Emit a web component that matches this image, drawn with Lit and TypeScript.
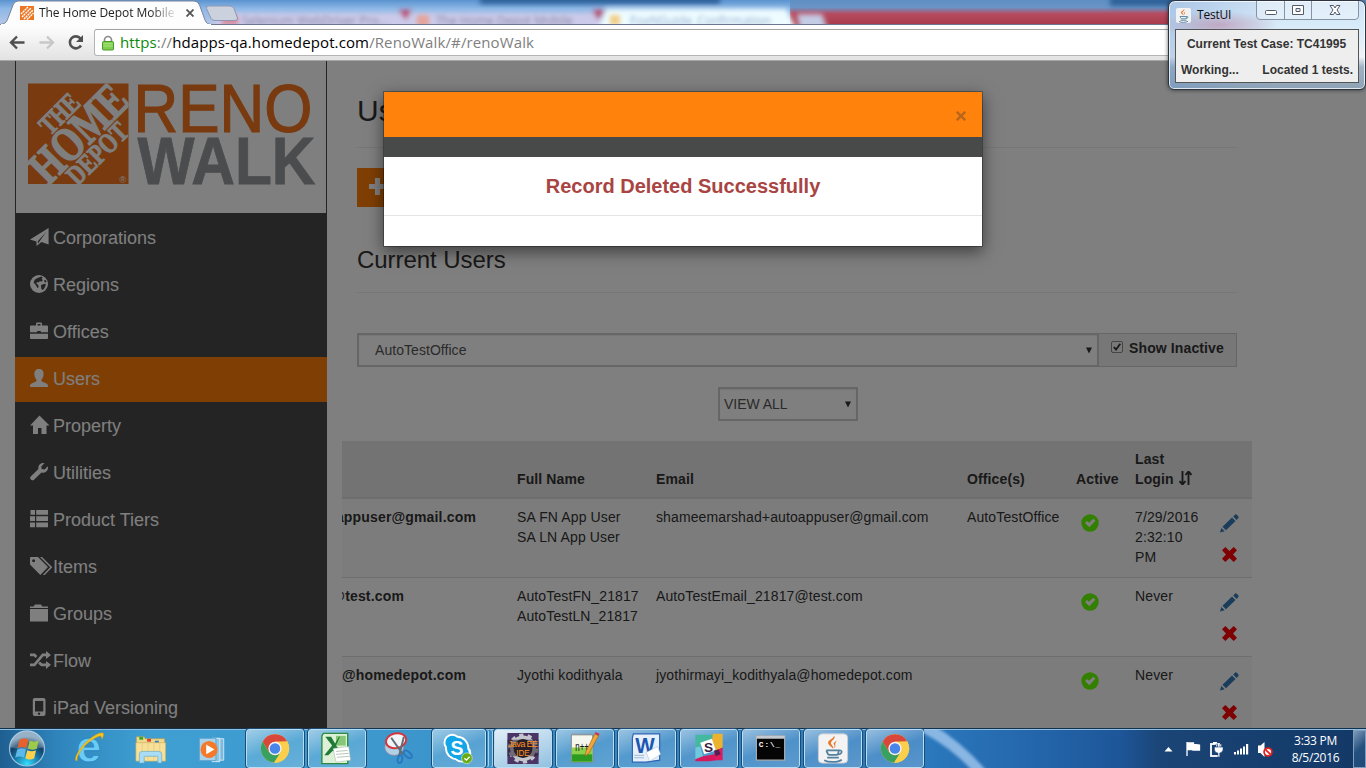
import { LitElement, html, css, svg } from "lit";
import { customElement } from "lit/decorators.js";

const WIN_LOGO = svg`
  <path d="M17 13.500c3-1.800 6-1.800 9-.2l-2 8.200c-3-1.500-6-1.500-8.800 0z" fill="#e8602c"/>
  <path d="M27.200 14c3 1.500 6 1.500 9 0l-2 8.200c-3 1.500-6 1.300-8.800-.1z" fill="#9ccb4a"/>
  <path d="M14.700 23c3-1.500 6-1.500 8.800 0l-2 8c-3-1.500-6-1.500-8.800.2z" fill="#5fb8ea"/>
  <path d="M24.800 23.700c3 1.400 6 1.400 8.800 0l-2 8.200c-3 1.400-6 1.400-8.800-.2z" fill="#fbd04a"/>`;

const CHROME = svg`
  <circle cx="29" cy="20" r="14.500" fill="#fbcb43"/>
  <path d="M16.400 12.800A14.500 14.500 0 0 1 41.600 12.800L29 13.500L22.700 23.700z" fill="#d8473a"/>
  <path d="M16.400 12.800L22.700 23.700L29 27.200L34 25L28.200 34.500A14.500 14.500 0 0 1 16.400 12.800z" fill="#38a160"/>
  <path d="M29 12.800H41.600A14.500 14.500 0 0 1 28.200 34.500L35.500 23.500z" fill="#fbcf4c"/>
  <circle cx="29" cy="20" r="6.800" fill="#f4f4f4"/><circle cx="29" cy="20" r="5.400" fill="#4a86ea"/>`;

const JAVA_CUP = svg`
  <path d="M30 7c3 3-4 5-3 8c.5 2 3 3 2 5c-1-2-5-3-5-6c0-3 6-4 6-7zM33 12c-2 1-4 2-3 4c1 1 1 3-1 4c5-2 0-4 4-8z" fill="#e8762b"/>
  <path d="M22 22h13M22 22c1 1 1 4 3 4.500h8c2-.5 1.500-3 2-4.500c4-1 4 4-1 4M23 29.500h12M20 32c4 2.500 14 2.500 18-.5" fill="none" stroke="#54819f" stroke-width="1.800"/>`;

const TASKS: { cls: string; art: unknown }[] = [
  { cls: "", art: svg`
    <text x="16" y="34" font-family="Liberation Sans" font-size="46" font-weight="bold" fill="#6accf5" stroke="#2a86c4" stroke-width=".8">e</text>
    <path d="M17 32.500c-5 1 0-11 10-20c8-7 17-11 17-7c0 2-1 4-2 5c0-3-1-4-4-2.500C26 13 16 26 17 32.500z" fill="#f7c31d" stroke="#c9930a" stroke-width=".4"/>` },
  { cls: "", art: svg`
    <path d="M14 8h8l1 2h20v5H14z" fill="#f2d98a" stroke="#b79a4a" stroke-width=".6"/>
    <path d="M17 8h4v3h-4z" fill="#36a832"/><path d="M25 10h4v3h-4z" fill="#d8432f"/><path d="M33 12h4v3h-4z" fill="#2f7fd0"/>
    <path d="M13.500 14H44v19H13.500z" fill="#f7e09a" stroke="#c5a95a" stroke-width=".6"/>
    <path d="M20 14v18M26 14v18M32 14v18M38 14v18" stroke="#e6c970" stroke-width=".7"/>
    <path d="M17 35v-9q0-3 3-3h17q3 0 3 3v9h-4v-7H22v7z" fill="#a9dcf5" stroke="#5ba3c9" stroke-width=".6"/>` },
  { cls: "", art: svg`
    <path d="M33 10h7v22h-7z" fill="#7cb9dc" stroke="#cbe6f5"/><path d="M28 9.500h8v24h-8z" fill="#8cc6e6" stroke="#d5edf8"/>
    <path d="M15 9.500h17v23H15z" fill="#a6d3eb" stroke="#5da3ce"/>
    <circle cx="25" cy="21" r="8.800" fill="#f4792a"/><path d="M22 16l8.500 5l-8.500 5z" fill="#fff"/>` },
  { cls: "open", art: CHROME },
  { cls: "open", art: svg`
    <path d="M15 4.500h25v31H13.500V7z" fill="#dff0d8" stroke="#2e8a3c" stroke-width="1.400"/>
    <path d="M28 7h10v10H28z" fill="#86c677"/><path d="M17 8h6l4 7l4-7h1l-4 9l8 10h-7l-4-5l-5 5h-4l8-10z" fill="#1e7a34"/>
    <path d="M25 20l16-2l2 14l-15 2z" fill="#fff" stroke="#9ab59d" stroke-width=".5"/>
    <path d="M28 23l12-1M28 26l13-1M29 29l13-1" stroke="#a5b5a5" stroke-width=".8"/>` },
  { cls: "", art: svg`
    <ellipse cx="24" cy="19" rx="9.500" ry="8" fill="#c3dcea" opacity=".85" stroke="#d98088" stroke-width=".6"/>
    <ellipse cx="26" cy="12" rx="10.500" ry="7.500" transform="rotate(-12 26 12)" fill="#f2f5f7" stroke="#d5363d" stroke-width="2"/>
    <path d="M21 9l12 17M34 8l-5 20" stroke="#5f6c76" stroke-width="2"/>
    <ellipse cx="30" cy="31" rx="2.300" ry="4" transform="rotate(12 30 31)" fill="none" stroke="#2a78bd" stroke-width="2"/>
    <ellipse cx="38" cy="26" rx="5" ry="2.600" transform="rotate(42 38 26)" fill="none" stroke="#2a78bd" stroke-width="2"/>` },
  { cls: "open stacked", art: svg`
    <circle cx="20" cy="14" r="9" fill="#fff"/><circle cx="30" cy="25" r="9.500" fill="#fff"/><circle cx="25" cy="19.500" r="12.500" fill="#fff"/>
    <circle cx="20" cy="14" r="7" fill="#12a5e8"/><circle cx="29.500" cy="25" r="7.500" fill="#12a5e8"/><circle cx="25" cy="19.500" r="10.500" fill="#12a5e8"/>
    <text x="18.300" y="26.500" font-family="Liberation Sans" font-size="20" font-weight="bold" fill="#fff">S</text>
    <circle cx="35" cy="30" r="5.500" fill="#6aab14" stroke="#e3f2d0" stroke-width=".6"/><path d="M32.500 30l2 2l3.300-3.500" fill="none" stroke="#fff" stroke-width="1.300"/>` },
  { cls: "open active", art: svg`
    <path d="M13 4h32v32H13z" fill="#4a3566"/>
    <circle cx="29" cy="20" r="11.500" fill="#221c26" stroke="#c4c4cc" stroke-width="3.500"/>
    <circle cx="29" cy="20" r="14" fill="none" stroke="#c4c4cc" stroke-width="3" stroke-dasharray="4.400 4.400"/>
    <path d="M13 11h32v17H13z" fill="#2a2030" opacity=".55"/>
    <text x="29" y="18.500" text-anchor="middle" font-family="Liberation Sans" font-size="9.500" textLength="31" fill="#ff9022">Java EE</text>
    <text x="29" y="27.500" text-anchor="middle" font-family="Liberation Sans" font-size="10" textLength="14" lengthAdjust="spacingAndGlyphs" fill="#ff9022">IDE</text>` },
  { cls: "open", art: svg`
    <path d="M15 6h22v28H15z" fill="#f5f7ee" stroke="#777" stroke-width=".8"/>
    <path d="M15.500 19h21v14.500h-21z" fill="#8bd14b"/><path d="M15.500 26h21v7.500h-21z" fill="#2d9b1f"/>
    <path d="M16 6v-2M19 6v-2M22 6v-2M25 6v-2M28 6v-2M31 6v-2M34 6v-2" stroke="#999" stroke-width="1"/>
    <text x="19" y="23" font-family="Liberation Sans" font-size="14" textLength="14" lengthAdjust="spacingAndGlyphs" fill="#111">n++</text>
    <path d="M29 28l1-5l9-18l4 2l-10 18z" fill="#eea63a" stroke="#9a5a16" stroke-width=".6"/><path d="M39 5l4 2l1-2l-4-2z" fill="#d1354b"/>` },
  { cls: "open", art: svg`
    <path d="M15 5h27v27l-14 2H14V9z" fill="#e6f0fa" stroke="#2c62b4" stroke-width="1.200"/>
    <text x="17" y="25" font-family="Liberation Sans" font-size="23" font-weight="bold" textLength="20" lengthAdjust="spacingAndGlyphs" fill="#1b57b0">W</text>
    <path d="M16 27h10M16 29.500h10" stroke="#8aa8d0" stroke-width=".8"/>
    <path d="M28 24l12-6l3 8l-11 7z" fill="#fff" stroke="#9db3d0" stroke-width=".5"/>` },
  { cls: "open", art: svg`
    <path d="M15 6h18l-3 9l-10 3l-5 1z" fill="#45b8a0"/><path d="M33 5h10v14l-7 3l-4-9z" fill="#ecb32e"/>
    <path d="M15 19l5-1l3 10l-8 3z" fill="#70c8dc"/><path d="M15 31l8-3l12-2l2 6l-8 1H15z" fill="#d6195c"/><path d="M36 22l7-3v13h-7l-2-6z" fill="#dd1c60"/>
    <path d="M20 14l12-4l4 12l-12 4z" fill="#fff"/><path d="M34 22l5-1l2 5l-5 2z" fill="#5a2050"/>
    <text x="24" y="24" font-family="Liberation Sans" font-size="14" font-weight="bold" fill="#3c1f43">S</text>` },
  { cls: "open", art: svg`
    <path d="M14 7h29v25H14z" fill="#050505" stroke="#a9adb0" stroke-width="1.200"/><path d="M14 7h29v3H14z" fill="#c3c9ce"/>
    <text x="16.500" y="18.500" font-family="Liberation Mono" font-size="8" font-weight="bold" textLength="22" fill="#fff">C:\\_</text>` },
  { cls: "open", art: svg`<rect x="14" y="5" width="30" height="30" rx="4" fill="#f3f3f3" stroke="#c5cdd4"/>${JAVA_CUP}` },
  { cls: "open", art: CHROME },
];

const NAV: { label: string; icon: unknown }[] = [
  { label: "Corporations", icon: svg`<path d="M0 11.500L18.600 0V16.500L11.500 14L6.500 18V13.500zM16.300 3.800L7.800 13.300L8 15.500L9.600 13.300z" fill-rule="evenodd"/>` },
  { label: "Regions", icon: svg`<circle cx="9" cy="9" r="9"/><path class="cut" d="M7.500 3l4-1.600l1.200 1l-1.200 1.600l1.500 1l-1.400 1.400l-1.900-.2l-1 1.400l-1.700-.5l-.6 1.600l1.600 1l.7 2l-1 1.500l-2.500-4l-1.600-1.500l1-3zM11 10l3.500-1.200l1.500.8l-1.200 3l-2 2.600l-1.600-1.700zM13.800 5.500l2-.4l.8 1.900l-1.600.5z"/>` },
  { label: "Offices", icon: svg`<path d="M1 3.500H6V1.800Q6 .5 7.300.5h3.400Q12 .5 12 1.800V3.500h5q1 0 1 1V10.200H10.800V9H7.200v1.200H0V4.500q0-1 1-1zM7.500 2v1.500h3V2zM0 11.800H18V16q0 1-1 1H1q-1 0-1-1z" fill-rule="evenodd"/>` },
  { label: "Users", icon: svg`<path d="M9 0c3 0 4.800 2 4.600 5.200c-.1 2.300-.9 4-2.100 5.200c-.4 1 .1 1.900 1 2.300l4 1.800q1.500.7 1.500 2.200V18H0v-1.300q0-1.500 1.500-2.200l4-1.800c.9-.4 1.400-1.300 1-2.300C5.300 9.200 4.500 7.500 4.400 5.200C4.200 2 6 0 9 0z"/>` },
  { label: "Property", icon: svg`<path d="M9.500-.5L19.500 9.500H16.500V18H11.500V12H8V18H3V9.500H0z"/>` },
  { label: "Utilities", icon: svg`<path d="M17.800 3.300L14.500 6.500L11.700 5.900L11.300 3.500L14.400.2C11.200-.7 7.700 1.900 8.400 6L.5 13.700C-.8 15.300 1.800 18.300 3.800 17L11.500 9.500C15.500 10.600 18.900 7.200 17.800 3.300z"/>` },
  { label: "Product Tiers", icon: svg`<path d="M.5 0H5V4.700H.5zM6.200 0H18V4.700H6.200zM0 6.200H5V11H0zM6.200 6.200H18V11H6.200zM0 12.500H5V17.200H0zM6.200 12.500H18V17.200H6.200z"/>` },
  { label: "Items", icon: svg`<path d="M0 1Q0 0 1 0H8L18 10L10.300 18L0 7.500zM3.600 2.200a1.500 1.500 0 1 0 .01 0z" fill-rule="evenodd"/><path d="M10 0H12L22.300 10.200L14.700 18H12.800L20.200 10.200z"/>` },
  { label: "Groups", icon: svg`<path d="M0 2.500H3.500L5 .5H11L12.300 2.500H18V4H0zM0 5H18V17.500H0z"/>` },
  { label: "Flow", icon: svg`<path d="M0 2.500H5L7.300 5L5.500 7L3.800 5.300H0zM0 15.200H5L13.400 5.300H16V8L21 3.900L16 0V2.500H12.200L3.800 12.400H0zM9.900 10.500L8.200 12.700L11.200 15.200H16V18L21 13.800L16 10V12.400H12.300z"/>` },
  { label: "iPad Versioning", icon: svg`<path d="M4.500 0h9Q15.500 0 15.500 2V16Q15.500 18 13.500 18H4.500Q2.800 18 2.800 16V2Q2.800 0 4.500 0zM5 3V13.500H13.300V3zM9 14.500a1.200 1.200 0 1 0 .01 0z" fill-rule="evenodd"/>` },
];

const ROWS = [
  { login: "autoappuser@gmail.com", pad: 33, names: ["SA FN App User", "SA LN App User"], email: "shameemarshad+autoappuser@gmail.com", office: "AutoTestOffice", last: ["7/29/2016", "2:32:10", "PM"] },
  { login: "AutoTestUser_21817@test.com", pad: 105, names: ["AutoTestFN_21817", "AutoTestLN_21817"], email: "AutoTestEmail_21817@test.com", office: "", last: ["Never"] },
  { login: "jyothirmayi_kodithyala@homedepot.com", pad: 43, names: ["Jyothi kodithyala"], email: "jyothirmayi_kodithyala@homedepot.com", office: "", last: ["Never"] },
];

@customElement("browser-chrome")
class BrowserChrome extends LitElement {
  static styles = css`
    :host { display: block; height: 61px; font-family: "Open Sans", "Noto Sans", sans-serif; }
    .strip { display: grid; height: 25px; overflow: hidden; }
    .strip > * { grid-area: 1 / 1; }
    .glass { display: block; width: 1366px; height: 25px; }
    .tab { display: flex; align-items: center; width: 188px; height: 25px; padding-left: 20px; z-index: 1; }
    .fav { width: 14px; height: 14px; flex: none; }
    .title { width: 139px; margin-left: 5px; font-size: 12px; letter-spacing: -0.05px; color: #222; white-space: nowrap; overflow: hidden; -webkit-mask-image: linear-gradient(90deg, #000 80%, transparent 100%); }
    .close { width: 8px; height: 8px; margin-left: 8px; flex: none; }
    .bar { display: flex; box-sizing: border-box; height: 36px; padding: 4px 0 4px; background: linear-gradient(#fefefe, #e2e2e2); border-bottom: 1px solid #a6a6a6; }
    .nav { width: 94px; height: 27px; flex: none; }
    .omni { flex: 1; display: flex; align-items: center; box-sizing: border-box; height: 27px; padding-left: 7px; border: 1px solid #b4b4b4; border-top-color: #a0a0a0; border-radius: 3px 0 0 3px; background: #fff; font-size: 15px; color: #808080; white-space: nowrap; letter-spacing: 0.12px; }
    .url { margin-top: -2px; }
    .lock { width: 12px; height: 16px; margin-right: 6px; }
    .secure { color: #0b8a0b; }
    .host { color: #000; }
  `;
  render() {
    return html`
      <div class="strip">
        <svg class="glass" viewBox="0 0 1366 25">
          <defs>
            <linearGradient id="g" x2="0" y2="1"><stop offset="0" stop-color="#5a93cf"/><stop offset=".35" stop-color="#8db8e6"/><stop offset="1" stop-color="#b8c8e8"/></linearGradient>
            <linearGradient id="r" x2="0" y2="1"><stop offset="0" stop-color="#5f8fc4"/><stop offset=".3" stop-color="#6b94c6"/><stop offset=".55" stop-color="#b64c60"/><stop offset="1" stop-color="#a83a4c"/></linearGradient>
            <filter id="b" x="-20%" y="-60%" width="140%" height="220%"><feGaussianBlur stdDeviation="2.500"/></filter>
            <filter id="bt" x="-10%" y="-60%" width="120%" height="220%"><feGaussianBlur stdDeviation="2.100"/></filter>
          </defs>
          <path d="M0 0H1366V25H0z" fill="url(#g)"/>
          <path d="M790 0H1366V25H790z" fill="url(#r)"/>
          <g filter="url(#b)">
            <path d="M480-6H720V4H480zM1110-6H1180V6H1110z" fill="#2f6299"/>
            <path d="M215 13H600V32H215z" fill="#cccaea"/>
            <path d="M398 10l14 0l-6 10zM592 10l14 0l-8 10z" fill="#b8436b"/>
            <path d="M606 9H786L797 30H598z" fill="#eefcff"/>
            <path d="M797 14H822L828 30H800z" fill="#c4cbe4"/>
          </g>
          <g filter="url(#bt)" font-family="Open Sans" font-size="12">
            <rect x="222" y="16" width="16" height="9" fill="#d98b9c"/><rect x="417" y="15" width="12" height="12" fill="#e3a49c"/><rect x="610" y="15" width="10" height="10" fill="#f2cf8a"/>
            <text x="242" y="25" fill="#85849e">Selenium WebDriver Pro...</text><text x="436" y="25" fill="#85849e">The Home Depot Mobile</text><text x="630" y="25" fill="#8fa9cf">FoxNGuide_Confirmation</text>
          </g>
          <path d="M0 24.500H1366" stroke="#6c7690"/>
          <path d="M206.500 8.500Q206 6 208.500 6H230Q233 6 234 8.500L237.500 18Q238 20.500 235 20.500H215Q212 20.500 211 18.500z" fill="#ccd2dd" stroke="#8d97b4"/>
          <path d="M0 25V24.500Q6 24 7.500 19.500L13 5Q14.500 1 18 1H194Q198 1 199.500 5L205 20Q206.500 24.500 212 24.500V25z" fill="#fdfdfd" stroke="#7a829b" stroke-width="1"/>
          <path d="M1 24H211V25.500H1z" fill="#fdfdfd"/>
        </svg>
        <div class="tab">
          <svg class="fav" viewBox="0 0 14 14"><path d="M0 0H14V14H0z" fill="#ee7623"/><path d="M1 8L8 1M2 11L11 2M4 13L13 4M7 13.500L13.500 7" stroke="#fff" stroke-width="1.400" stroke-dasharray="2 .6"/></svg>
          <span class="title">The Home Depot Mobile Apps</span>
          <svg class="close" viewBox="0 0 8 8"><path d="M.5.5L7.500 7.500M7.500.5L.5 7.500" stroke="#555" stroke-width="1.800"/></svg>
        </div>
      </div>
      <div class="bar">
        <svg class="nav" viewBox="0 0 94 27">
          <path d="M24.500 13.500H12M17 7.500L11 13.500L17 19.500" fill="none" stroke="#505050" stroke-width="2.400"/>
          <path d="M39.500 13.500H52M47 7.500L53 13.500L47 19.500" fill="none" stroke="#c8c8c8" stroke-width="2.400"/>
          <path d="M80.500 9.500A6 6 0 1 0 81 16.500" fill="none" stroke="#505050" stroke-width="2.600"/><path d="M83 6V13H76z" fill="#505050"/>
        </svg>
        <div class="omni">
          <svg class="lock" viewBox="0 0 12 16"><path d="M2.500 8V5a3.500 3.500 0 0 1 7 0V8" fill="none" stroke="#8c8c8c" stroke-width="1.700"/><rect x=".5" y="6.500" width="11" height="8.500" rx="1" fill="#7fce4e" stroke="#4c9a2c"/><path d="M1.500 8.800h9M1.500 11h9" stroke="#a8e482"/></svg>
          <span class="url"><span class="secure">https</span>://<span class="host">hdapps-qa.homedepot.com</span>/RenoWalk/#/renoWalk</span>
        </div>
      </div>`;
  }
}

@customElement("side-nav")
class SideNav extends LitElement {
  static styles = css`
    :host { display: block; width: 312px; height: 667px; overflow: hidden; background: #484848; font: 18px "Liberation Sans", Arial, sans-serif; color: #fff; }
    .logo { display: block; width: 310px; height: 152px; margin: 0 1px; background: #fff; }
    .items { padding-top: 3px; }
    .item { display: flex; align-items: center; box-sizing: border-box; height: 45px; margin-bottom: 2px; padding-left: 15px; }
    .item.on { background: #ff7e08; }
    .icon { width: 18px; height: 18px; margin: 0 5px 4px 0; overflow: visible; fill: #fff; }
    .cut { fill: #484848; }
    .item span { padding-bottom: 1px; }
  `;
  render() {
    return html`
      <svg class="logo" viewBox="16 61 310 152">
        <defs><clipPath id="sq"><path d="M28 83.500H128.500V184H28z"/></clipPath></defs>
        <path d="M28 83.500H128.500V184H28z" fill="#f27420"/>
        <g clip-path="url(#sq)" fill="#fff" stroke="#fff" font-family="Liberation Serif" font-weight="bold">
          <g transform="translate(78.300 133.500) rotate(-45)">
            <text x="-22" y="-18" font-size="28" stroke-width="1" textLength="45" lengthAdjust="spacingAndGlyphs">THE</text>
            <text x="-59" y="16" font-size="48" stroke-width="1.500" textLength="118" lengthAdjust="spacingAndGlyphs">HOME</text>
            <text x="-38" y="37" font-size="28" stroke-width="1" textLength="75" lengthAdjust="spacingAndGlyphs">DEPOT</text>
          </g>
          <text x="119.500" y="182.500" font-size="9" stroke="none" font-family="Liberation Sans" font-weight="normal">®</text>
        </g>
        <text x="133.500" y="132" font-family="Liberation Sans" font-size="69" fill="#f27420" stroke="#f27420" stroke-width="1.200" textLength="179" lengthAdjust="spacingAndGlyphs">RENO</text>
        <text x="137.500" y="183.500" font-family="Liberation Sans" font-size="67" font-weight="bold" fill="#97999b" stroke="#97999b" stroke-width=".8" textLength="178" lengthAdjust="spacingAndGlyphs">WALK</text>
      </svg>
      <div class="items">
        ${NAV.map((n) => html`<div class="item ${n.label === "Users" ? "on" : ""}"><svg class="icon" viewBox="0 0 18 18">${n.icon}</svg><span>${n.label}</span></div>`)}
      </div>`;
  }
}

@customElement("users-page")
class UsersPage extends LitElement {
  static styles = css`
    :host { display: block; width: 910px; height: 667px; overflow: hidden; font: 14px/20px "Liberation Sans", Arial, sans-serif; letter-spacing: 0.12px; color: #333; }
    .top { padding: 0 15px; }
    h1, h2 { margin: 0; font-weight: 400; letter-spacing: 0; border-bottom: 1px solid #eee; box-sizing: border-box; }
    h1 { height: 87px; padding-top: 33px; font-size: 30px; line-height: 34px; }
    .add { display: flex; align-items: center; width: 120px; height: 39px; margin-top: 20px; padding-left: 12px; box-sizing: border-box; background: #ff7e08; }
    .add svg { width: 17px; height: 17px; margin-bottom: 3px; }
    h2 { height: 86px; padding-top: 39px; font-size: 24px; line-height: 28px; letter-spacing: -0.06px; }
    .filter { display: flex; margin-top: 40px; height: 34px; }
    .select { display: flex; align-items: center; justify-content: space-between; box-sizing: border-box; height: 34px; border: 2px solid #ccc; color: #555; padding: 0 5px 0 4px; box-shadow: inset 0 1px 1px rgba(0,0,0,.08); }
    .select svg { width: 6px; height: 7px; }
    .wide { width: 742px; padding-left: 16px; letter-spacing: 0.05px; }
    .small { width: 140px; margin: 20px 0 20px 361px; letter-spacing: -0.05px; }
    .inactive { display: flex; align-items: center; flex: 1; box-sizing: border-box; border: 1px solid #ccc; border-left: 0; background: #eee; font-weight: 700; padding: 0 0 4px 12px; }
    .box { width: 12px; height: 12px; margin: 0 6px 3px 0; }
    .row { display: grid; box-sizing: border-box; grid-template-columns: 167px 139px 311px 109px 59px 85px 40px; height: 79px; border-top: 1px solid #ddd; }
    .row.first { height: 78px; border-top: 0; }
    .row.odd { background: #f9f9f9; }
    .row > div { padding: 8px 0 0 8px; white-space: nowrap; }
    .row > .login { display: flex; justify-content: flex-end; overflow: hidden; padding-left: 0; font-weight: 700; letter-spacing: 0.16px; }
    .head { height: 58px; background: #e6e6e6; border-top: 0; border-bottom: 2px solid #ddd; font-weight: 700; align-items: end; }
    .head > div { padding: 0 0 8px 8px; }
    .sort { width: 13px; height: 14px; margin-left: 1px; vertical-align: -1px; }
    .row > .ok { padding: 15px 0 0 13px; }
    .ok svg { display: block; width: 18px; height: 18px; }
    .acts { display: flex; flex-direction: column; gap: 14px; }
    .row > .acts { padding: 15px 0 0 8px; }
    .pencil { display: block; width: 19px; height: 19px; }
    .del { display: block; width: 15px; height: 15px; margin-left: 2px; }
  `;
  render() {
    const arrow = html`<svg viewBox="0 0 6 7"><path d="M0 .5H6L3 6.500z" fill="#333"/></svg>`;
    return html`
      <div class="top">
        <h1>Users</h1>
        <div class="add"><svg viewBox="0 0 17 17"><path d="M6 0H11V6H17V11H11V17H6V11H0V6H6z" fill="#fff"/></svg></div>
        <h2>Current Users</h2>
        <div class="filter">
          <div class="select wide"><span>AutoTestOffice</span>${arrow}</div>
          <div class="inactive"><svg class="box" viewBox="0 0 12 12"><rect x=".5" y=".5" width="11" height="11" rx="1.500" fill="#f2f2f2" stroke="#888"/><path d="M2.800 6L5 8.500L9.300 2.800" fill="none" stroke="#333" stroke-width="1.800"/></svg>Show Inactive</div>
        </div>
        <div class="select small"><span>VIEW ALL</span>${arrow}</div>
      </div>
      <div class="row head">
        <div></div><div>Full Name</div><div>Email</div><div>Office(s)</div><div>Active</div>
        <div>Last<br>Login <svg class="sort" viewBox="0 0 13 14"><path d="M3.500 0V13M.5 10L3.500 13.500L6.500 10M9.500 14V1M6.500 4L9.500.5L12.500 4" fill="none" stroke="#333" stroke-width="1.900"/></svg></div><div></div>
      </div>
      ${ROWS.map((r, i) => html`
        <div class="row ${i === 0 ? "first" : ""} ${i % 2 === 0 ? "odd" : ""}">
          <div class="login" style="padding-right:${r.pad}px">${r.login}</div>
          <div>${r.names.map((n) => html`${n}<br>`)}</div>
          <div>${r.email}</div>
          <div>${r.office}</div>
          <div class="ok"><svg viewBox="0 0 18 18"><circle cx="9" cy="9" r="8.700" fill="#66ff00"/><path d="M4 9L6 7L8 8.800L12.300 4.700L14.400 6.800L8.300 13.200z" fill="#fff"/></svg></div>
          <div>${r.last.map((n) => html`${n}<br>`)}</div>
          <div class="acts">
            <svg class="pencil" viewBox="0 0 19 19"><path d="M0 18.500L1.300 14L4.700 17.300zM2.500 12.800L12 3.500L15.500 7L6 16.300zM13.200 2.500L15.200.5Q16 0 16.800.8L18.400 2.400Q19 3.200 18.400 4L16.600 5.900z" fill="#337ab7"/></svg>
            <svg class="del" viewBox="0 0 15 15"><path d="M3.300 0L7.500 4L11.700 0L15 3.300L11 7.500L15 11.700L11.700 15L7.500 11L3.300 15L0 11.700L4 7.500L0 3.300z" fill="#f00"/></svg>
          </div>
        </div>`)}`;
  }
}

@customElement("task-bar")
class TaskBar extends LitElement {
  static styles = css`
    :host { display: flex; box-sizing: border-box; height: 40px; border-top: 1px solid #12314d; box-shadow: inset 0 1px #8fbfe0;
      background: linear-gradient(90deg, #1f5f91 0, #2f86bd 60px, #3f9fd2 150px, #3c97cd 400px, #3283c2 700px, #2b78bd 930px, #2363a8 1050px, #1d5699 1120px, #1b4576 1160px, #123866 1366px); }
    .start { width: 60px; height: 39px; flex: none; }
    .slots { display: flex; gap: 4px; }
    .slot { box-sizing: border-box; width: 58px; height: 39px; }
    .slot svg { display: block; width: 58px; height: 38px; }
    .open { border: 1px solid #b9ddf2; border-radius: 3px; outline: 1px solid #1c4c74; background: linear-gradient(160deg, rgba(255,255,255,.5), rgba(255,255,255,.15) 50%, rgba(255,255,255,.22)); }
    .open svg { margin: -1px; }
    .active { background: linear-gradient(160deg, rgba(255,255,255,.85), rgba(255,255,255,.45)); }
    .stacked { width: 54px; margin-right: 4px; box-shadow: 3px 0 0 -1px #3c8fc5, 4px 0 0 -1px #a8d3ec, 7px 0 0 -1px #3c8fc5, 8px 0 0 -1px #a8d3ec; }
    .beam { flex: 1; height: 39px; min-width: 0; }
    .tray { width: 116px; height: 39px; flex: none; }
    .clock { box-sizing: border-box; width: 80px; padding: 3px 0 0 5px; text-align: center; font: 12px/17px "Open Sans", "Noto Sans", sans-serif; letter-spacing: -0.3px; color: #fff; }
    .desk { width: 13px; margin: 1px 0 0; box-sizing: border-box; border: 1px solid #7f9cba; background: linear-gradient(135deg, #7f9bb8, #24507f 50%, #1f4a7a); }
  `;
  render() {
    return html`
      <svg class="start" viewBox="0 0 60 39">
        <defs><radialGradient id="o" cx=".5" cy=".95" r=".8"><stop offset="0" stop-color="#35e0ff"/><stop offset=".45" stop-color="#1878a8"/><stop offset=".75" stop-color="#134066"/><stop offset="1" stop-color="#7a9db8"/></radialGradient></defs>
        <circle cx="27" cy="19.500" r="17.500" fill="url(#o)" stroke="#9cc3dd" stroke-width="1.200"/>
        <path d="M10 18A17 17 0 0 1 44 18Q27 23 10 18z" fill="#fff" opacity=".22"/>
        <g transform="translate(2.500 -2.500)">${WIN_LOGO}</g>
      </svg>
      <div class="slots">${TASKS.map((t) => html`<div class="slot ${t.cls}"><svg viewBox="0 0 58 39">${t.art}</svg></div>`)}</div>
      <svg class="beam" viewBox="0 0 233 39" preserveAspectRatio="none">
        <defs><filter id="f" x="-20%" y="-20%" width="140%" height="140%"><feGaussianBlur stdDeviation="1.800"/></filter></defs>
        <path d="M-4-6L6-6Q40 14 66 46H52Q30 20-4 2z" fill="#a9cdf2" opacity=".75" filter="url(#f)"/>
      </svg>
      <svg class="tray" viewBox="1157 729 116 39">
        <path d="M1164.500 751.500L1168.500 747L1172.500 751.500z" fill="#fff"/>
        <path d="M1187 742V756M1187.500 743H1193.500V744.500L1199.500 745V750H1193V749.500H1187.500z" fill="#fff" stroke="#fff" stroke-width="1.300"/>
        <rect x="1211" y="744" width="8" height="12" fill="none" stroke="#fff" stroke-width="1.800"/><path d="M1213 742h4v2h-4z" fill="#fff"/>
        <path d="M1214.500 747H1223V750Q1222 753 1219.500 753V757H1218V753Q1215 753 1214.500 750zM1216 744h1.500v3H1216zM1220 744h1.500v3H1220z" fill="#fff" stroke="#173f6e" stroke-width=".5"/>
        <path d="M1234 752h2v2.500h-2zM1237 750.500h2v4h-2zM1240 748.500h2v6h-2zM1243 746.500h2v8h-2zM1246 744h2.200v10.500H1246z" fill="#fff"/>
        <path d="M1258 745.500h2.500L1264.500 742V757L1260.500 753H1258z" fill="#fff"/>
        <circle cx="1268" cy="752" r="3.900" fill="#fff" stroke="#e02222" stroke-width="1.800"/><path d="M1265.300 749.300L1270.700 754.700" stroke="#e02222" stroke-width="1.800"/>
      </svg>
      <div class="clock">3:33 PM<br>8/5/2016</div>
      <div class="desk"></div>`;
  }
}

@customElement("test-window")
class TestWindow extends LitElement {
  static styles = css`
    :host { display: block; box-sizing: border-box; height: 90px; padding: 0 6px; border: 1px solid #2b3440; border-radius: 7px 7px 6px 6px; box-shadow: inset 0 0 0 1px rgba(255,255,255,.75), 0 0 4px rgba(0,0,0,.6);
      background: radial-gradient(ellipse 60px 14px at 50px 24px, rgba(190,120,150,.5), transparent), linear-gradient(90deg, rgba(100,145,200,.35), transparent 55%), linear-gradient(#cfe2f5, #d9ecfa 28px, #eef2f5 56px, #9fb2c4 66px, #8fa3b6); }
    .title { display: flex; height: 28px; font: 12px "Open Sans", "Noto Sans", sans-serif; color: #111; }
    .java { width: 15px; height: 15px; margin: 7px 0 0 1px; background: #f2f2f2; border-radius: 2px; }
    .name { margin: 5px 0 0 6px; letter-spacing: -0.2px; }
    .btns { width: 104px; height: 19px; margin: 0 -1px 0 auto; }
    .body { box-sizing: border-box; height: 54px; padding: 7px 5px 0 5px; border: 1px solid #555; background: #eee; font: bold 12px/15px "Liberation Sans", Arial, sans-serif; color: #333; }
    .case { margin-left: -1px; text-align: center; white-space: nowrap; }
    .line { display: flex; justify-content: space-between; margin-top: 11px; white-space: nowrap; }
  `;
  render() {
    return html`
      <div class="title">
        <svg class="java" viewBox="14 5 30 30">${JAVA_CUP}</svg><span class="name">TestUI</span>
        <svg class="btns" viewBox="0 0 104 19">
          <path d="M.5 0V15Q.5 18.500 4 18.500H99Q102.500 18.500 102.500 15V0" fill="#fff" fill-opacity=".35" stroke="#8593a3"/>
          <path d="M28.500 0V18M55.500 0V18" stroke="#8593a3"/>
          <rect x="9.500" y="9.500" width="11" height="4" rx="1" fill="#fff" stroke="#555c68"/>
          <path d="M36.500 4.500h11v9h-11zM40 7.500v3h4v-3z" fill="#fff" fill-rule="evenodd" stroke="#555c68"/>
          <path d="M74 4.500H77.500L79 7L80.500 4.500H84L81 9L84 13.500H80.500L79 11L77.500 13.500H74L77 9z" fill="#fff" stroke="#555c68"/>
        </svg>
      </div>
      <div class="body">
        <div class="case">Current Test Case: TC41995</div>
        <div class="line"><span>Working...</span><span>Located 1 tests.</span></div>
      </div>`;
  }
}

@customElement("app-root")
class AppRoot extends LitElement {
  static styles = css`
    :host { display: block; position: relative; width: 1366px; height: 768px; overflow: hidden; }
    .page { position: relative; display: flex; gap: 15px; box-sizing: border-box; height: 667px; padding-left: 15px; background: #fff; overflow: hidden; }
    .shade { position: absolute; inset: 0; background: rgba(0,0,0,.5); }
    .modal { position: absolute; left: 383px; top: 30px; width: 598px; height: 154px; border: 1px solid rgba(0,0,0,.3); background: #fff; background-clip: padding-box; box-shadow: 0 5px 15px rgba(0,0,0,.5); font-family: "Liberation Sans", Arial, sans-serif; font-weight: 700; }
    .head { display: flex; align-items: center; justify-content: flex-end; box-sizing: border-box; height: 45px; padding-right: 16px; background: #ff820d; }
    .head svg { width: 10px; height: 10px; margin-top: 3px; }
    .band { height: 20px; background: #484949; }
    .msg { box-sizing: border-box; height: 59px; border-bottom: 1px solid #e5e5e5; text-align: center; font-size: 20px; line-height: 58px; color: #a94442; }
    .popup { position: absolute; left: 1168px; top: 0; width: 198px; }
  `;
  render() {
    return html`
      <browser-chrome></browser-chrome>
      <div class="page">
        <side-nav></side-nav>
        <users-page></users-page>
        <div class="shade"></div>
        <div class="modal">
          <div class="head"><svg viewBox="0 0 10 10"><path d="M.8.8L9.200 9.200M9.200.8L.8 9.200" stroke="#b8661b" stroke-width="2.400"/></svg></div>
          <div class="band"></div>
          <div class="msg">Record Deleted Successfully</div>
        </div>
      </div>
      <task-bar></task-bar>
      <test-window class="popup"></test-window>`;
  }
}
